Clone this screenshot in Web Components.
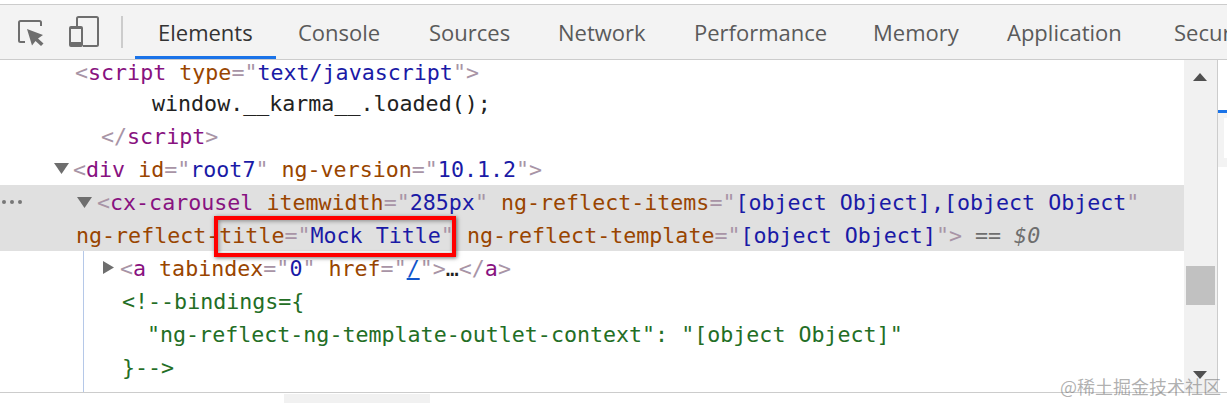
<!DOCTYPE html>
<html>
<head>
<meta charset="utf-8">
<style>
  html, body { margin: 0; padding: 0; background: #fff; overflow: hidden; }
  dt-app { width: 1227px; height: 403px; }
</style>
</head>
<body>
<dt-app>
  <dt-toolbar slot="toolbar">
    <dt-tab active style="width:141px">Elements</dt-tab>
    <dt-tab style="width:130px;padding-left:22px">Console</dt-tab>
    <dt-tab style="width:129px">Sources</dt-tab>
    <dt-tab style="width:136px">Network</dt-tab>
    <dt-tab style="width:179px">Performance</dt-tab>
    <dt-tab style="width:134px">Memory</dt-tab>
    <dt-tab style="width:167px">Application</dt-tab>
    <dt-tab style="width:76px">Security</dt-tab>
  </dt-toolbar>
  <dt-tree slot="tree">
    <dt-line first x="75"><span class="p">&lt;</span><span class="t">script</span> <span class="a">type</span><span class="p">="</span><span class="v">text/javascript</span><span class="p">"&gt;</span></dt-line>
    <dt-line x="152"><span class="k">window.__karma__.loaded();</span></dt-line>
    <dt-line x="101"><span class="p">&lt;/</span><span class="t">script</span><span class="p">&gt;</span></dt-line>
    <dt-line x="73" arrow="down" arrowx="54" arrowy="11"><span class="p">&lt;</span><span class="t">div</span> <span class="a">id</span><span class="p">="</span><span class="v">root7</span><span class="p">"</span> <span class="a">ng-version</span><span class="p">="</span><span class="v">10.1.2</span><span class="p">"&gt;</span></dt-line>
    <dt-selection>
      <dt-line x="97" arrow="down" arrowx="77" arrowy="12"><span class="p">&lt;</span><span class="t">cx-carousel</span> <span class="a">itemwidth</span><span class="p">="</span><span class="v">285px</span><span class="p">"</span> <span class="a">ng-reflect-items</span><span class="p">="</span><span class="v">[object Object],[object Object</span><span class="p">"</span></dt-line>
      <dt-line x="76"><span class="a">ng-reflect-title</span><span class="p">="</span><span class="v">Mock Title</span><span class="p">"</span> <span class="a">ng-reflect-template</span><span class="p">="</span><span class="v">[object Object]</span><span class="p">"&gt;</span> <span class="s">== $0</span></dt-line>
    </dt-selection>
    <dt-line x="120" arrow="right" arrowx="103" arrowy="10"><span class="p">&lt;</span><span class="t">a</span> <span class="a">tabindex</span><span class="p">="</span><span class="v">0</span><span class="p">"</span> <span class="a">href</span><span class="p">="</span><span class="l">/</span><span class="p">"&gt;</span><span class="k">…</span><span class="p">&lt;/</span><span class="t">a</span><span class="p">&gt;</span></dt-line>
    <dt-line x="122"><span class="c">&lt;!--bindings={</span></dt-line>
    <dt-line x="147"><span class="c">"ng-reflect-ng-template-outlet-context": "[object Object]"</span></dt-line>
    <dt-line x="122"><span class="c">}--&gt;</span></dt-line>
  </dt-tree>
  <dt-scrollbar slot="scrollbar"></dt-scrollbar>
  <dt-sidepane slot="side"></dt-sidepane>
</dt-app>

<script>
class DtApp extends HTMLElement {
  constructor() {
    super();
    this.attachShadow({mode: 'open'});
    this.shadowRoot.innerHTML = `
      <style>
        :host { display: block; position: relative; background: #fff; overflow: hidden; }
        .top { height: 4px; }
        .main { display: flex; height: 332px; border-bottom: 1px solid #ccc; }
        .footer { display: flex; height: 10px; padding: 1px 0 0 284px; box-sizing: border-box; }
        .footer i { display: block; width: 146px; background: #f1f1f1; }
        .mark {
          position: absolute; left: 1060px; top: 373px;
          font: 18px/26px "Noto Sans CJK SC", sans-serif;
          color: rgba(110, 110, 110, .55);
          white-space: nowrap;
        }
        .box {
          position: absolute; left: 214px; top: 216px; width: 242px; height: 41px;
          box-sizing: border-box; border: 4px solid #f00;
          box-shadow: 1px 1px 4px rgba(0, 0, 0, .55), inset 1px 1px 4px rgba(0, 0, 0, .4);
        }
      </style>
      <div class="top"></div>
      <slot name="toolbar"></slot>
      <div class="main">
        <slot name="tree"></slot>
        <slot name="scrollbar"></slot>
        <slot name="side"></slot>
      </div>
      <div class="footer"><i></i></div>
      <div class="box"></div>
      <div class="mark">@稀土掘金技术社区</div>`;
  }
}

class DtToolbar extends HTMLElement {
  constructor() {
    super();
    this.attachShadow({mode: 'open'});
    this.shadowRoot.innerHTML = `
      <style>
        :host {
          display: flex; height: 56px; box-sizing: border-box;
          background: #f3f3f3; border-top: 1px solid #ccc; border-bottom: 1px solid #ccc;
        }
        .tools { display: flex; align-items: center; flex: none; width: 135px; height: 54px; }
        svg { display: block; flex: none; }
        .sep { width: 2px; height: 32px; background: #ccc; margin-left: 21px; }
        .tabs { display: flex; overflow: hidden; flex: 1; }
      </style>
      <div class="tools">
        <svg style="margin-left:17px" width="28" height="28" viewBox="0 0 28 28">
          <path d="M8 24H3.500Q2 24 2 22.500V4.500Q2 3 3.500 3H22.500Q24 3 24 4.500V8" fill="none" stroke="#6e6e6e" stroke-width="2"/>
          <path d="M10 11 26 17 21 20.500 26.500 25.500 24 28 18.500 23 15 27.500Z" fill="#6e6e6e"/>
        </svg>
        <svg style="margin-left:23px" width="32" height="34" viewBox="0 0 32 34">
          <path d="M9 11V3.500Q9 2 10.500 2H28.500Q30 2 30 3.500V29.500Q30 31 28.500 31H15" fill="none" stroke="#6e6e6e" stroke-width="2"/>
          <path d="M3 11H13Q15 11 15 13V30Q15 32 13 32H3Q1 32 1 30V13Q1 11 3 11ZM3 14V27H13V14Z" fill="#6e6e6e" fill-rule="evenodd"/>
        </svg>
        <div class="sep"></div>
      </div>
      <div class="tabs"><slot></slot></div>`;
  }
}

class DtTab extends HTMLElement {
  constructor() {
    super();
    this.attachShadow({mode: 'open'});
    this.shadowRoot.innerHTML = `
      <style>
        :host {
          display: block; flex: none; box-sizing: border-box; height: 54px;
          padding-left: 23px; white-space: nowrap; overflow: hidden;
          font: 22px/54px "Open Sans", sans-serif; color: #5a5a5a;
        }
        :host([active]) { color: #333; box-shadow: inset 0 -3px 0 #1a73e8; }
      </style>
      <slot></slot>`;
  }
}

class DtTree extends HTMLElement {
  constructor() {
    super();
    this.attachShadow({mode: 'open'});
    this.shadowRoot.innerHTML = `
      <style>
        :host { display: block; position: relative; flex: none; width: 1184px; height: 332px; overflow: hidden; }
        .guide { position: absolute; left: 83px; top: 191px; bottom: 0; width: 1px; background: #b5c8e8; }
      </style>
      <slot></slot>
      <div class="guide"></div>`;
  }
}

class DtSelection extends HTMLElement {
  constructor() {
    super();
    this.attachShadow({mode: 'open'});
    this.shadowRoot.innerHTML = `
      <style>
        :host { display: block; position: relative; background: #e0e0e0; height: 66px; }
        .dots { position: absolute; left: 2px; top: 15px; display: flex; gap: 4px; }
        .dots i { width: 4px; height: 4px; border-radius: 50%; background: #777; }
      </style>
      <div class="dots"><i></i><i></i><i></i></div>
      <slot></slot>`;
  }
}

class DtLine extends HTMLElement {
  constructor() {
    super();
    this.attachShadow({mode: 'open'});
    const x = this.getAttribute('x');
    const arrow = this.getAttribute('arrow');
    const ax = this.getAttribute('arrowx');
    const ay = this.getAttribute('arrowy');
    let mark = '';
    if (arrow === 'down') mark = `<svg style="left:${ax}px;top:${ay}px" width="15" height="11"><path d="M0 0H15L7.500 11Z" fill="#6e6e6e"/></svg>`;
    if (arrow === 'right') mark = `<svg style="left:${ax}px;top:${ay}px" width="11" height="13"><path d="M0 0V13L11 6.500Z" fill="#6e6e6e"/></svg>`;
    this.shadowRoot.innerHTML = `
      <style>
        :host {
          display: block; position: relative; height: 33px; box-sizing: border-box;
          padding-left: ${x}px;
          font: 21.65px/33px "DejaVu Sans Mono", monospace; color: #222;
        }
        /* the first row is scrolled part way under the toolbar */
        :host([first]) { height: 26px; line-height: 24px; }
        .code { white-space: pre; padding-top: 1px; }
        svg { position: absolute; }
        ::slotted(.p) { color: #a894a6; }
        ::slotted(.t) { color: #881280; }
        ::slotted(.a) { color: #994500; }
        ::slotted(.v) { color: #1a1aa6; }
        ::slotted(.l) { color: #1155cc; text-decoration: underline; }
        ::slotted(.k) { color: #222; }
        ::slotted(.c) { color: #236e25; }
        ::slotted(.s) { color: #6e6e6e; font-style: italic; }
      </style>
      ${mark}<div class="code"><slot></slot></div>`;
  }
}

class DtScrollbar extends HTMLElement {
  constructor() {
    super();
    this.attachShadow({mode: 'open'});
    this.shadowRoot.innerHTML = `
      <style>
        :host { display: block; position: relative; flex: none; width: 33px; background: #f1f1f1; }
        .up, .down { position: absolute; left: 9px; width: 0; height: 0; border: 7.500px solid transparent; border-top: 0; border-bottom: 8px solid #505050; }
        .up { top: 13px; }
        .down { top: 311px; transform: rotate(180deg); }
        .thumb { position: absolute; left: 2px; right: 2px; top: 206px; height: 39px; background: #c1c1c1; }
      </style>
      <div class="up"></div><div class="thumb"></div><div class="down"></div>`;
  }
}

class DtSidepane extends HTMLElement {
  constructor() {
    super();
    this.attachShadow({mode: 'open'});
    this.shadowRoot.innerHTML = `
      <style>
        :host { display: block; flex: 1; border-left: 1px solid #ccc; padding-top: 50px; }
        .bar { height: 3px; background: #1a73e8; }
        .panel { box-sizing: border-box; height: 54px; padding: 5px 0 9px 6px; background: #f3f3f3; }
        .inner { height: 100%; background: #fff; }
      </style>
      <div class="bar"></div><div class="panel"><div class="inner"></div></div>`;
  }
}

customElements.define('dt-app', DtApp);
customElements.define('dt-toolbar', DtToolbar);
customElements.define('dt-tab', DtTab);
customElements.define('dt-tree', DtTree);
customElements.define('dt-selection', DtSelection);
customElements.define('dt-line', DtLine);
customElements.define('dt-scrollbar', DtScrollbar);
customElements.define('dt-sidepane', DtSidepane);
</script>
</body>
</html>
